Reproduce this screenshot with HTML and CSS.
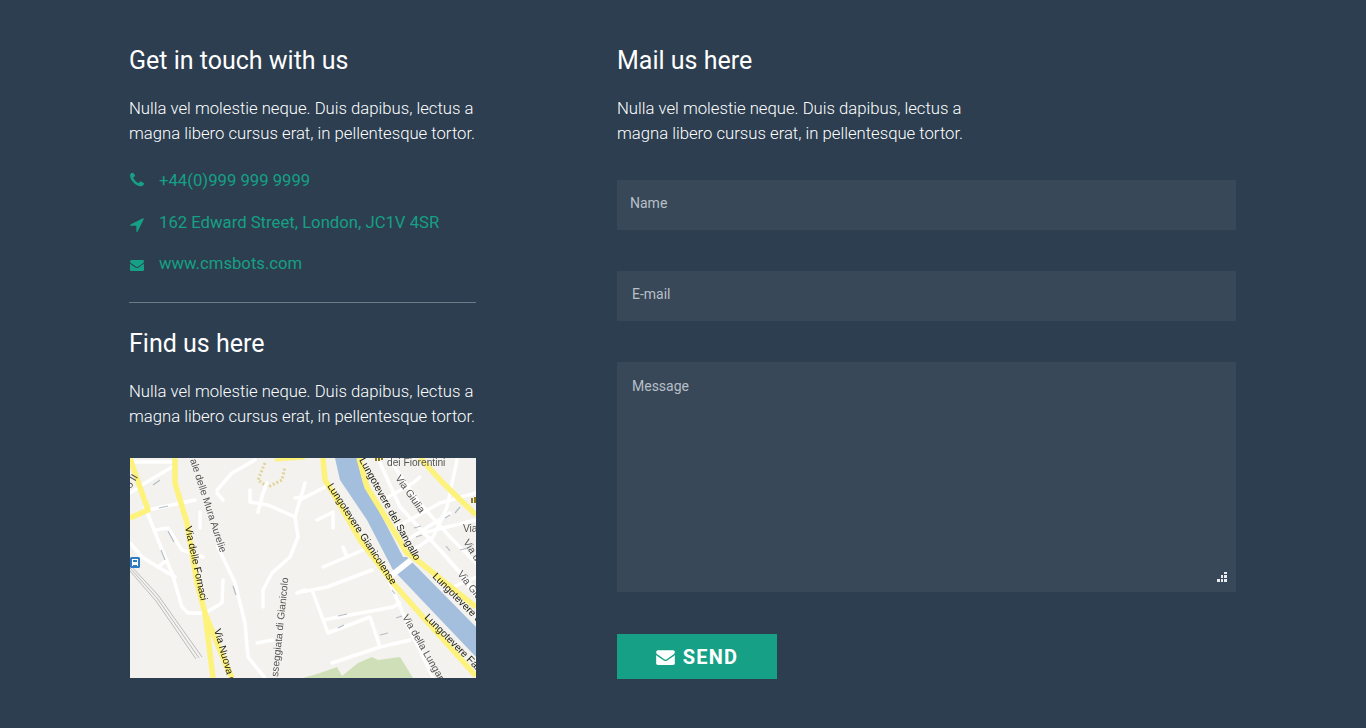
FILE: index.html
```html
<!DOCTYPE html>
<html lang="en">
<head>
<meta charset="utf-8">
<title>Contact</title>
<link rel="stylesheet" href="styles.css">
</head>
<body>
<main class="page">
  <section class="col-left">
    <h2 class="title">Get in touch with us</h2>
    <p class="lead">Nulla vel molestie neque. Duis dapibus, lectus a magna libero cursus erat, in pellentesque tortor.</p>
    <ul class="contacts">
      <li class="contact">
        <svg class="ico ico-phone" viewBox="192 192 1408 1408"><path d="M1600 1240q0 27-10 70.5t-21 68.5q-21 50-122 106-94 51-186 51-27 0-53-3.5t-57.5-12.5-47-14.5-55.5-20.5-49-18q-98-35-175-83-127-79-264-216t-216-264q-48-77-83-175-3-9-18-49t-20.5-55.5-14.5-47-12.5-57.5-3.5-53q0-92 51-186 56-101 106-122 25-11 68.5-21t70.5-10q14 0 21 3 18 6 53 76 11 19 30 54t35 63.5 31 53.5q3 4 17.5 25t21.5 35.5 7 28.5q0 20-28.5 50t-62 55-62 53-28.5 46q0 9 5 22.5t8.5 20.5 14 24 11.5 19q76 137 174 235t235 174q2 1 19 11.5t24 14 20.5 8.5 22.5 5q18 0 46-28.5t53-62 55-62 50-28.5q14 0 28.5 7t35.5 21.5 25 17.5q25 15 53.5 31t63.5 35 54 30q70 35 76 53 3 7 3 21z"/></svg>
        <span>+44(0)999 999 9999</span>
      </li>
      <li class="contact">
        <svg class="ico ico-arrow" viewBox="180 225 1440 1440"><path d="M1593 349l-640 1280q-17 35-57 35-5 0-15-2-22-5-35.5-22.5t-13.5-39.5v-576h-576q-22 0-39.5-13.5t-22.5-35.5 4-42 29-30l1280-640q13-7 29-7 27 0 45 19 15 14 18.5 34.5t-6.5 39.5z"/></svg>
        <span>162 Edward Street, London, JC1V 4SR</span>
      </li>
      <li class="contact contact-last">
        <svg class="ico ico-mail" viewBox="0 128 1792 1536"><path d="M1792 710v794q0 66-47 113t-113 47h-1472q-66 0-113-47t-47-113v-794q44 49 101 87 362 246 497 345 57 42 92.5 65.5t94.5 48 110 24.5h2q51 0 110-24.5t94.5-48 92.5-65.5q170-123 498-345 57-39 100-87zm0-294q0 79-49 151t-122 123q-376 261-468 325-10 7-42.5 30.5t-54 38-52 32.5-57.5 27-50 9h-2q-23 0-50-9t-57.5-27-52-32.5-54-38-42.5-30.5q-91-64-262-182.5t-205-142.5q-62-42-117-115.5t-55-136.5q0-78 41.5-130t118.5-52h1472q65 0 112.5 47t47.5 113z"/></svg>
        <span>www.cmsbots.com</span>
      </li>
    </ul>
    <hr class="rule">
    <h2 class="title">Find us here</h2>
    <p class="lead">Nulla vel molestie neque. Duis dapibus, lectus a magna libero cursus erat, in pellentesque tortor.</p>
    <svg class="map" viewBox="0 0 346 220" role="img" aria-label="Map">
      <rect class="m-land" width="346" height="220"/>
      <path class="m-green" d="M173 220L190 215L207 209L212 218L228 205L242 199L248 202L270 199L283 220Z"/>
      <g class="m-rail">
        <path d="M0 107L28 137L72 199"/>
        <path d="M0 110L27 140L69 200"/>
        <path d="M0 113L26 143L66 201"/>
      </g>
      <path class="m-dots" d="M135 5L128 22L138 29L152 22L155 9"/>
      <g class="m-road">
        <path d="M0 35L15 25L42 9"/>
        <path d="M2 4L42 4"/>
        <path d="M18 52L65 42"/>
        <path d="M15 49L32 92L42 115L52 149L58 155L75 155"/>
        <path d="M25 72L38 70L52 92L73 99"/>
        <path d="M0 85L12 99L28 109L37 102"/>
        <path d="M28 109L45 119"/>
        <path d="M75 155L92 145L93 122"/>
        <path d="M88 89L105 125L115 165L118 199L135 220"/>
        <path d="M87 32L102 15L125 2"/>
        <path d="M87 35L93 42"/>
        <path d="M70 54L70 70"/>
        <path d="M120 32L120 44L138 47L165 59L168 79L160 99L142 115L133 132L133 149"/>
        <path d="M128 54L133 35L137 25"/>
        <path d="M165 59L175 25"/>
        <path d="M165 40L175 39"/>
        <path d="M127 185L143 182"/>
        <path d="M167 135L175 132"/>
        <path d="M170 42L195 29"/>
        <path d="M187 62L203 54L203 70"/>
        <path d="M193 109L233 92"/>
        <path d="M213 89L217 99"/>
        <path d="M170 134L182 132L198 175L240 159L250 189"/>
        <path d="M182 132L197 129L242 112"/>
        <path d="M193 162L263 149L270 145"/>
        <path d="M202 205L250 189L280 182"/>
        <path d="M260 125L283 179L290 192L303 220"/>
        <path d="M250 5L270 49L310 92L346 132"/>
        <path d="M260 2L287 42L320 79L346 105"/>
        <path d="M327 2L317 49L303 79L283 92"/>
        <path d="M253 42L283 25L290 19"/>
        <path d="M267 69L310 45L346 35"/>
        <path d="M277 82L320 55"/>
        <path d="M293 75L346 62"/>
        <path d="M346 119L323 129"/>
        <path d="M310 92L330 115L346 139"/>
      </g>
      <g class="m-arrow">
        <path d="M23 27L30 22M29 50L38 48M38 73L44 84M31 92L35 102M103 128L106 137"/>
        <path d="M208 158L217 156M208 170L214 167M250 177L258 175M266 160L272 158M262 132L265 136"/>
        <path d="M284 70L291 68M286 79L292 77M315 60L320 57M325 55L330 49M316 88L320 93M330 92L338 90"/>
      </g>
      <path class="m-river" d="M205 0L210 22L237 62L263 112L268 117L346 199L346 169L277 99L273 99L247 49L233 25L227 0Z"/>
      <path class="m-bridge" d="M262 117L281 102"/>
      <g class="m-major">
        <path d="M45 0L45 25L57 65L67 125L75 155L83 220"/>
        <path d="M75 155L95 205L102 220"/>
        <path d="M0 0L5 15L18 52L0 60"/>
        <path d="M193 0L195 22L203 35L230 82L263 125L293 159L346 218"/>
        <path d="M229 0L237 29L253 55L277 95L287 102L346 149"/>
        <path d="M290 0L313 25L346 57"/>
        <path class="m-minor" d="M145 2L175 0"/>
      </g>
      <path class="m-poi" d="M245 0h2v3h-2zM248 0h2v3h-2zM251 0h2v2h-2zM341 40h2v5h-2zM344 39h2v6h-2z"/>
      <rect class="m-bus" x="0" y="99" width="10" height="11" rx="1.5"/>
      <path class="m-bus-in" d="M2 101h6v7h-1v-1h-4v1h-1zM3 102v2h4v-2z" fill-rule="evenodd"/>
      <g class="m-label">
        <text transform="translate(55 69) rotate(78)">Via delle Fornaci</text>
        <text transform="translate(84 172) rotate(74)">Via Nuova d</text>
        <text transform="translate(197 28) rotate(57)">Lungotevere Gianicolense</text>
        <text transform="translate(229 2) rotate(61)">Lungotevere del Sangallo</text>
        <text transform="translate(302 119) rotate(45)">Lungotevere d</text>
        <text transform="translate(294 160) rotate(45)">Lungotevere Far</text>
      </g>
      <g class="m-label-grey">
        <text transform="translate(60 2) rotate(72)">ale delle Mura Aurelie</text>
        <text transform="translate(148 219) rotate(-84)">sseggiata di Gianicolo</text>
        <text transform="translate(1 31) rotate(-60)">o II</text>
        <text transform="translate(265 20) rotate(55)">Via Giulia</text>
        <text transform="translate(257 8)">dei Fiorentini</text>
        <text transform="translate(272 159) rotate(60)">Via della Lungar</text>
        <text transform="translate(333 74)">Via</text>
        <text transform="translate(333 84) rotate(58)">Via d</text>
        <text transform="translate(327 116) rotate(52)">Via Giu</text>
      </g>
    </svg>
  </section>
  <section class="col-right">
    <h2 class="title">Mail us here</h2>
    <p class="lead lead-right">Nulla vel molestie neque. Duis dapibus, lectus a magna libero cursus erat, in pellentesque tortor.</p>
    <form class="form">
      <input class="field field-name" type="text" placeholder="Name">
      <input class="field" type="text" placeholder="E-mail">
      <div class="area-wrap">
        <textarea class="field area" placeholder="Message"></textarea>
        <svg class="grip" viewBox="0 0 10 10"><path d="M7 0h3v2H7zM4 3h2v3H4zM7 3h3v3H7zM0 7h3v3H0zM4 7h2v3H4zM7 7h3v3H7z"/></svg>
      </div>
      <button class="send" type="button">
        <svg class="send-ico" viewBox="0 128 1792 1536"><path d="M1792 710v794q0 66-47 113t-113 47h-1472q-66 0-113-47t-47-113v-794q44 49 101 87 362 246 497 345 57 42 92.5 65.5t94.5 48 110 24.5h2q51 0 110-24.5t94.5-48 92.5-65.5q170-123 498-345 57-39 100-87zm0-294q0 79-49 151t-122 123q-376 261-468 325-10 7-42.5 30.5t-54 38-52 32.5-57.5 27-50 9h-2q-23 0-50-9t-57.5-27-52-32.5-54-38-42.5-30.5q-91-64-262-182.5t-205-142.5q-62-42-117-115.5t-55-136.5q0-78 41.5-130t118.5-52h1472q65 0 112.5 47t47.5 113z"/></svg>
        <span>SEND</span>
      </button>
    </form>
  </section>
</main>
</body>
</html>
```
FILE: styles.css
```css
* { box-sizing: border-box; }
html, body { margin: 0; height: 100%; }
body {
  background: #2c3e50;
  color: #fff;
  font-family: Roboto, "Liberation Sans", sans-serif;
  overflow: hidden;
}
.page {
  display: flex;
  gap: 141px;
  padding: 46px 130px 0 129px;
}
.col-left { width: 347px; flex: none; }
.col-right { width: 619px; flex: none; }
.title {
  margin: 0;
  font-size: 25px;
  font-weight: 400;
  line-height: 30px;
}
.lead {
  margin: 20px 0 0;
  font-size: 16.7px;
  font-weight: 300;
  line-height: 25px;
}
.lead-right { max-width: 347px; }
.contacts {
  list-style: none;
  margin: 23px 0 0;
  padding: 0;
  display: flex;
  flex-direction: column;
  gap: 18px;
}
.contact {
  display: flex;
  align-items: center;
  gap: 15px;
  height: 24px;
  color: #16a085;
  font-size: 16.7px;
  font-weight: 400;
  line-height: 24px;
}
.contact-last { margin-top: -1px; }
.ico { width: 14px; flex: none; margin-left: 1px; fill: #16a085; }
.ico-phone { height: 14px; margin-top: -2px; }
.ico-arrow { height: 14px; margin-top: 4px; }
.ico-mail { height: 12px; margin-top: 2px; }
.rule {
  border: 0;
  border-top: 1px solid #6d7a87;
  margin: 26px 0 0;
  height: 0;
}
.rule + .title { margin-top: 26px; }
.map {
  display: block;
  width: 346px;
  height: 220px;
  margin: 29px 0 0 1px;
  filter: blur(0.35px);
}
.m-land { fill: #f3f2ee; }
.m-green { fill: #cfe0b8; }
.m-rail path { fill: none; stroke: #bcbcbc; stroke-width: 1; }
.m-dots { fill: none; stroke: #e0d49a; stroke-width: 3; stroke-dasharray: 2 2; }
.m-road path { fill: none; stroke: #fff; stroke-width: 3.5; stroke-linejoin: round; stroke-linecap: round; }
.m-arrow path { fill: none; stroke: #b4bdc6; stroke-width: 1.2; }
.m-major path { fill: none; stroke: #fdf27c; stroke-width: 5.5; stroke-linejoin: round; }
.m-major .m-minor { stroke-width: 3; }
.m-river { fill: #a3bfdd; }
.m-bridge { fill: none; stroke: #fff; stroke-width: 6; }
.m-poi { fill: #8c7a1a; }
.m-bus { fill: #2f7cc4; }
.m-bus-in { fill: #fff; }
.m-label text { font-family: "Liberation Sans", sans-serif; font-size: 10.2px; fill: #1c1c10; }
.m-label-grey text { font-family: "Liberation Sans", sans-serif; font-size: 10.2px; fill: #555; }
.form { margin-top: 34px; display: flex; flex-direction: column; }
.field {
  display: block;
  width: 100%;
  height: 50px;
  margin: 0 0 41px;
  padding: 0 15px 4px;
  border: 0;
  border-radius: 0;
  outline: 0;
  background: #384859;
  color: #fff;
  font-family: Roboto, "Liberation Sans", sans-serif;
  font-size: 14px;
  font-weight: 400;
}
.field-name { padding-left: 13px; }
.field::placeholder { color: #b7bfc7; opacity: 1; }
.area-wrap { position: relative; height: 230px; margin-bottom: 42px; }
.area { height: 230px; margin: 0; padding-top: 15px; resize: none; line-height: 18px; }
.grip { position: absolute; right: 9px; bottom: 10px; width: 10px; height: 10px; fill: #e8ecef; }
.send {
  display: flex;
  align-items: center;
  justify-content: center;
  gap: 8px;
  width: 160px;
  height: 45px;
  padding: 0;
  border: 0;
  background: #16a085;
  color: #fff;
  font-family: Roboto, "Liberation Sans", sans-serif;
  font-size: 20px;
  font-weight: 700;
  letter-spacing: 1.2px;
}
.send-ico { width: 19px; height: 16px; fill: #fff; flex: none; }
```
